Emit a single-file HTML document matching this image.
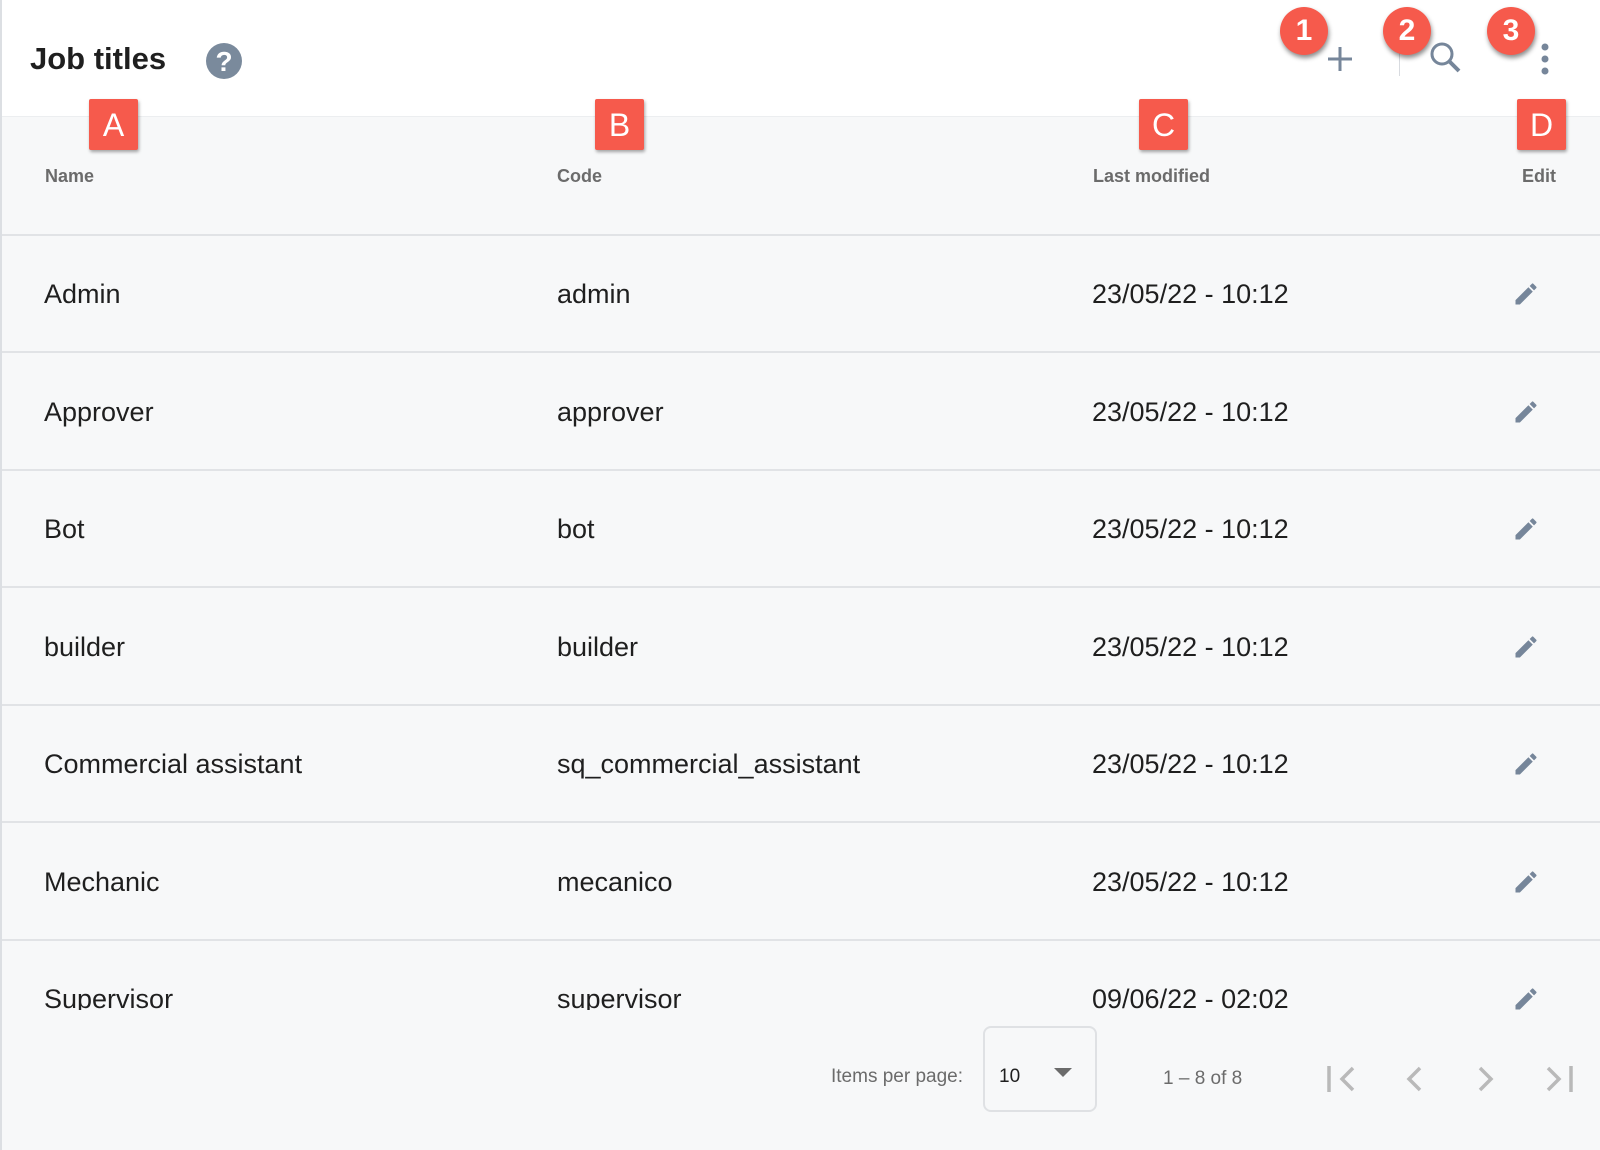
<!DOCTYPE html>
<html><head><meta charset="utf-8"><style>
*{margin:0;padding:0;box-sizing:border-box}
body{width:1600px;height:1150px;overflow:hidden;background:#f7f8f9;font-family:"Liberation Sans",Arial,sans-serif;position:relative}
.bl{position:absolute;left:0;top:0;width:2px;height:1150px;background:#dcdfe3;z-index:5}
.top{position:absolute;left:0;top:0;width:1600px;height:117px;background:#fff;border-bottom:1px solid #eceef0}
.title{position:absolute;left:30px;top:41px;font-size:31px;font-weight:bold;color:#1f1f1f}
.help{position:absolute;left:206px;top:43px;width:36px;height:36px;border-radius:50%;background:#7a8a9c;color:#fff;font-weight:bold;font-size:28px;text-align:center;line-height:37px}
.badge{position:absolute;width:48px;height:48px;border-radius:50%;background:#f65a4c;color:#fff;font-size:30px;font-weight:bold;text-align:center;line-height:48px;box-shadow:1px 3px 5px rgba(0,0,0,.45)}
.box{position:absolute;width:49px;height:51px;background:#f65a4c;color:#fff;font-size:32px;text-align:center;line-height:52px;box-shadow:1px 2px 3px rgba(0,0,0,.35);border-radius:2px;top:99px}
.th{position:absolute;top:166px;font-size:18px;font-weight:bold;color:#6b6b6b}
.line{position:absolute;left:0;width:1600px;height:2px;background:#e1e3e6}
.td{position:absolute;font-size:27px;color:#1f1f1f}
.pencil{position:absolute;left:1512px}
.pg{position:absolute;font-size:19px;color:#6b6b6b}
</style></head><body>
<div class="top"></div>
<div class="bl"></div>
<div class="title">Job titles</div>
<div class="help">?</div>
<svg style="position:absolute;left:1326px;top:45px" width="28" height="28" viewBox="0 0 28 28"><path d="M14 2v24M2 14h24" stroke="#76869a" stroke-width="3"/></svg>
<div style="position:absolute;left:1399px;top:46px;width:1px;height:30px;background:#d8dbe0"></div>
<svg style="position:absolute;left:1428px;top:40px" width="36" height="36" viewBox="0 0 36 36"><circle cx="14" cy="14" r="10" fill="none" stroke="#76869a" stroke-width="3"/><path d="M21 21l10 10" stroke="#76869a" stroke-width="4"/></svg>
<svg style="position:absolute;left:1538px;top:42px" width="14" height="34" viewBox="0 0 14 34"><circle cx="7" cy="5" r="3.5" fill="#76869a"/><circle cx="7" cy="17" r="3.5" fill="#76869a"/><circle cx="7" cy="29" r="3.5" fill="#76869a"/></svg>
<div class="badge" style="left:1280px;top:7px">1</div>
<div class="badge" style="left:1383px;top:7px">2</div>
<div class="badge" style="left:1487px;top:7px">3</div>
<div class="box" style="left:89px">A</div>
<div class="box" style="left:595px">B</div>
<div class="box" style="left:1139px">C</div>
<div class="box" style="left:1517px">D</div>
<div class="th" style="left:45px">Name</div>
<div class="th" style="left:557px">Code</div>
<div class="th" style="left:1093px">Last modified</div>
<div class="th" style="left:1522px">Edit</div>

<div class="line" style="top:234px"></div>
<div class="td" style="left:44px;top:279px">Admin</div><div class="td" style="left:557px;top:279px">admin</div><div class="td" style="left:1092px;top:279px">23/05/22 - 10:12</div>
<svg class="pencil" style="top:280px" width="28" height="28" viewBox="0 0 24 24"><path d="M3 17.25V21h3.75L17.81 9.94l-3.75-3.75L3 17.25zM20.71 7.04a1 1 0 000-1.41l-2.34-2.34a1 1 0 00-1.41 0l-1.83 1.83 3.75 3.75 1.83-1.83z" fill="#76869a"/></svg>
<div class="line" style="top:351px"></div>
<div class="td" style="left:44px;top:397px">Approver</div><div class="td" style="left:557px;top:397px">approver</div><div class="td" style="left:1092px;top:397px">23/05/22 - 10:12</div>
<svg class="pencil" style="top:398px" width="28" height="28" viewBox="0 0 24 24"><path d="M3 17.25V21h3.75L17.81 9.94l-3.75-3.75L3 17.25zM20.71 7.04a1 1 0 000-1.41l-2.34-2.34a1 1 0 00-1.41 0l-1.83 1.83 3.75 3.75 1.83-1.83z" fill="#76869a"/></svg>
<div class="line" style="top:469px"></div>
<div class="td" style="left:44px;top:514px">Bot</div><div class="td" style="left:557px;top:514px">bot</div><div class="td" style="left:1092px;top:514px">23/05/22 - 10:12</div>
<svg class="pencil" style="top:515px" width="28" height="28" viewBox="0 0 24 24"><path d="M3 17.25V21h3.75L17.81 9.94l-3.75-3.75L3 17.25zM20.71 7.04a1 1 0 000-1.41l-2.34-2.34a1 1 0 00-1.41 0l-1.83 1.83 3.75 3.75 1.83-1.83z" fill="#76869a"/></svg>
<div class="line" style="top:586px"></div>
<div class="td" style="left:44px;top:632px">builder</div><div class="td" style="left:557px;top:632px">builder</div><div class="td" style="left:1092px;top:632px">23/05/22 - 10:12</div>
<svg class="pencil" style="top:633px" width="28" height="28" viewBox="0 0 24 24"><path d="M3 17.25V21h3.75L17.81 9.94l-3.75-3.75L3 17.25zM20.71 7.04a1 1 0 000-1.41l-2.34-2.34a1 1 0 00-1.41 0l-1.83 1.83 3.75 3.75 1.83-1.83z" fill="#76869a"/></svg>
<div class="line" style="top:704px"></div>
<div class="td" style="left:44px;top:749px">Commercial assistant</div><div class="td" style="left:557px;top:749px">sq_commercial_assistant</div><div class="td" style="left:1092px;top:749px">23/05/22 - 10:12</div>
<svg class="pencil" style="top:750px" width="28" height="28" viewBox="0 0 24 24"><path d="M3 17.25V21h3.75L17.81 9.94l-3.75-3.75L3 17.25zM20.71 7.04a1 1 0 000-1.41l-2.34-2.34a1 1 0 00-1.41 0l-1.83 1.83 3.75 3.75 1.83-1.83z" fill="#76869a"/></svg>
<div class="line" style="top:821px"></div>
<div class="td" style="left:44px;top:867px">Mechanic</div><div class="td" style="left:557px;top:867px">mecanico</div><div class="td" style="left:1092px;top:867px">23/05/22 - 10:12</div>
<svg class="pencil" style="top:868px" width="28" height="28" viewBox="0 0 24 24"><path d="M3 17.25V21h3.75L17.81 9.94l-3.75-3.75L3 17.25zM20.71 7.04a1 1 0 000-1.41l-2.34-2.34a1 1 0 00-1.41 0l-1.83 1.83 3.75 3.75 1.83-1.83z" fill="#76869a"/></svg>
<div class="line" style="top:939px"></div>
<div style="position:absolute;left:0;top:941px;width:1600px;height:69px;overflow:hidden">
<div class="td" style="left:44px;top:43px">Supervisor</div><div class="td" style="left:557px;top:43px">supervisor</div><div class="td" style="left:1092px;top:43px">09/06/22 - 02:02</div>
<svg class="pencil" style="top:44px" width="28" height="28" viewBox="0 0 24 24"><path d="M3 17.25V21h3.75L17.81 9.94l-3.75-3.75L3 17.25zM20.71 7.04a1 1 0 000-1.41l-2.34-2.34a1 1 0 00-1.41 0l-1.83 1.83 3.75 3.75 1.83-1.83z" fill="#76869a"/></svg>
</div>
<div class="pg" style="left:831px;top:1066px">Items per page:</div>
<div style="position:absolute;left:983px;top:1026px;width:114px;height:86px;border:2px solid #dfe1e4;border-radius:8px"></div>
<div class="pg" style="left:999px;top:1066px;color:#1f1f1f">10</div>
<div style="position:absolute;left:1054px;top:1068px;border-left:9px solid transparent;border-right:9px solid transparent;border-top:9px solid #6b6b6b"></div>
<div class="pg" style="left:1163px;top:1068px">1 – 8 of 8</div>
<svg style="position:absolute;left:1325px;top:1063px" width="250" height="32" viewBox="0 0 250 32" fill="none" stroke="#b9b9b9" stroke-width="3.5"><path d="M4 3v26M28 5l-11 11 11 11"/><path d="M95 5l-11 11 11 11"/><path d="M155 5l11 11-11 11"/><path d="M223 5l11 11-11 11M246 3v26"/></svg>
</body></html>
